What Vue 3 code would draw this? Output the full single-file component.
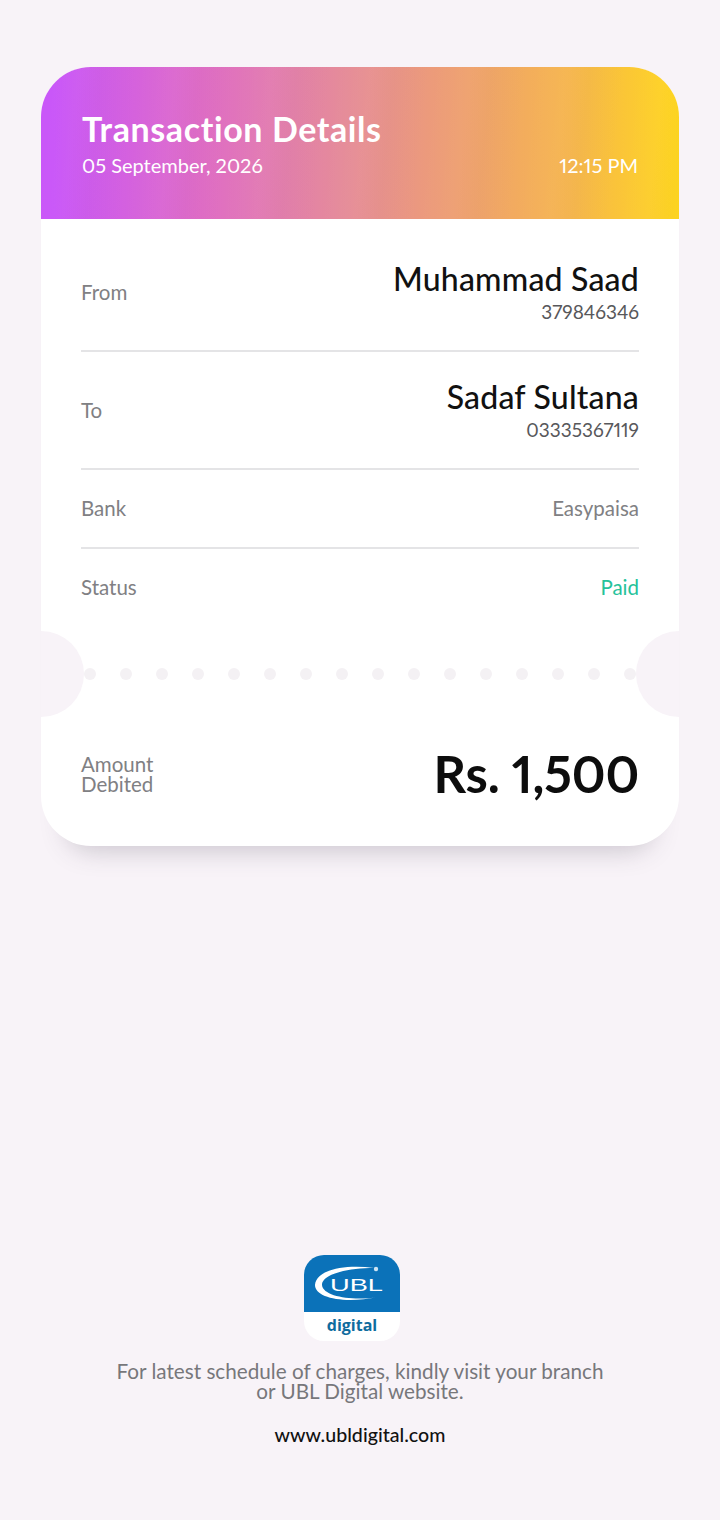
<script setup>
const rows = [
  { label: 'From', name: 'Muhammad Saad', sub: '379846346' },
  { label: 'To', name: 'Sadaf Sultana', sub: '03335367119' }
]
const dots = 16
</script>

<template>
  <div class="page">
    <section class="card">
      <header class="head">
        <h1>Transaction Details</h1>
        <div class="head-meta">
          <span>05 September, 2026</span>
          <span>12:15 PM</span>
        </div>
      </header>

      <div class="body">
        <div class="row party" v-for="row in rows" :key="row.label">
          <span class="label">{{ row.label }}</span>
          <div class="who">
            <div class="name">{{ row.name }}</div>
            <div class="sub">{{ row.sub }}</div>
          </div>
        </div>
        <div class="row plain">
          <span class="label">Bank</span>
          <span class="label">Easypaisa</span>
        </div>
        <div class="row plain last">
          <span class="label">Status</span>
          <span class="paid">Paid</span>
        </div>
      </div>

      <div class="tear">
        <i class="dot" v-for="n in dots" :key="n"></i>
        <b class="notch left"></b>
        <b class="notch right"></b>
      </div>

      <div class="total">
        <span class="label amount-label">Amount<br />Debited</span>
        <span class="amount">Rs. 1,500</span>
      </div>
    </section>

    <footer class="foot">
      <svg class="logo" width="96" height="86" viewBox="0 0 96 86">
        <rect width="96" height="86" rx="20" fill="#fff" />
        <path d="M0 57V20A20 20 0 0 1 20 0H76A20 20 0 0 1 96 20V57Z" fill="#0b72b9" />
        <path d="M70 13C40 9 12 15 11 30C11 43 40 49 74 42C50 46 19 42 18 30C18 19 44 13 70 13Z" fill="#fff" />
        <circle cx="72" cy="14" r="2.2" fill="#cfe4f3" />
        <text x="26" y="36" textLength="53" lengthAdjust="spacingAndGlyphs" class="logo-ubl">UBL</text>
        <text x="48" y="76" text-anchor="middle" class="logo-digital">digital</text>
      </svg>
      <p class="note">For latest schedule of charges, kindly visit your branch<br />or UBL Digital website.</p>
      <div class="site">www.ubldigital.com</div>
    </footer>
  </div>
</template>

<style>
html,
body {
  background: #f8f3f8;
}
</style>

<style scoped>
.page {
  width: 720px;
  height: 1520px;
  background: #f8f3f8;
  font-family: Lato, "Open Sans", sans-serif;
  font-variant-ligatures: none;
  font-variant-numeric: proportional-nums;
  padding: 67px 41px 0;
  box-sizing: border-box;
  display: flex;
  flex-direction: column;
}

.card {
  height: 779px;
  background: #fff;
  border-radius: 50px;
  box-shadow: 0 30px 26px -26px rgba(70, 60, 80, 0.26);
  display: flex;
  flex-direction: column;
  flex-shrink: 0;
}

.head {
  height: 152px;
  box-sizing: border-box;
  padding: 43px 41px 0;
  border-radius: 50px 50px 0 0;
  color: #fff;
  background:
    repeating-linear-gradient(96deg, rgba(255, 255, 255, 0) 0, rgba(255, 255, 255, 0.025) 37px, rgba(120, 100, 120, 0.025) 61px, rgba(255, 255, 255, 0) 97px),
    linear-gradient(90deg, #c956f8 2%, #df6cc6 25%, #e58b9a 47%, #ee9f72 65%, #f6b64e 83%, #ffd61e 100%);
}

.head h1 {
  margin: 0;
  font-size: 34px;
  line-height: 38px;
  font-weight: 700;
  letter-spacing: 0.6px;
}

.head-meta {
  display: flex;
  justify-content: space-between;
  font-size: 20px;
  line-height: 24px;
  margin-top: 5px;
}

.body {
  padding: 0 40px;
}

.row {
  display: flex;
  justify-content: space-between;
  align-items: center;
  border-bottom: 2px solid #e4e4e6;
}

.party {
  height: 118px;
  box-sizing: border-box;
}

.party:first-child {
  height: 133px;
  padding-top: 15px;
}

.plain {
  height: 79px;
  padding-bottom: 2px;
  box-sizing: border-box;
}

.last {
  border-bottom: 0;
  padding-bottom: 3px;
}

.label {
  font-size: 20.5px;
  line-height: 24px;
  color: #808083;
}

.who {
  text-align: right;
}

.name {
  font-size: 32px;
  line-height: 38px;
  font-weight: 500;
  letter-spacing: 0.2px;
  color: #111;
}

.sub {
  font-size: 19px;
  line-height: 24px;
  color: #58585b;
  margin-top: 2px;
}

.paid {
  font-size: 20.5px;
  line-height: 24px;
  color: #25c29a;
}

.tear {
  position: relative;
  height: 86px;
  margin-top: 3px;
  padding: 0 43px;
  display: flex;
  justify-content: space-between;
  align-items: center;
}

.dot {
  width: 12px;
  height: 12px;
  border-radius: 50%;
  background: #f4f1f4;
}

.notch {
  position: absolute;
  top: 0;
  width: 43px;
  height: 86px;
  background: #f8f3f8;
}

.notch.left {
  left: 0;
  border-radius: 0 43px 43px 0;
}

.notch.right {
  right: 0;
  border-radius: 43px 0 0 43px;
}

.total {
  flex: 1;
  padding: 0 40px 15px;
  display: flex;
  justify-content: space-between;
  align-items: center;
}

.amount-label {
  line-height: 20px;
}

.amount {
  font-size: 50.8px;
  line-height: 60px;
  font-weight: 700;
  letter-spacing: -0.2px;
  color: #0d0d0d;
}

.foot {
  margin-top: 409px;
  display: flex;
  flex-direction: column;
  align-items: center;
}

.logo {
  display: block;
  margin-left: -16px;
}

.logo-ubl {
  font-family: "Liberation Sans", sans-serif;
  font-size: 17px;
  fill: #fff;
}

.logo-digital {
  font-family: "Open Sans", sans-serif;
  font-size: 16px;
  font-weight: 700;
  fill: #0f6c9e;
}

.note {
  margin: 20px 0 0;
  font-size: 20.7px;
  line-height: 20px;
  text-align: center;
  color: #77777b;
}

.site {
  margin-top: 22px;
  font-size: 19.6px;
  line-height: 24px;
  font-weight: 500;
  color: #111;
}
</style>
